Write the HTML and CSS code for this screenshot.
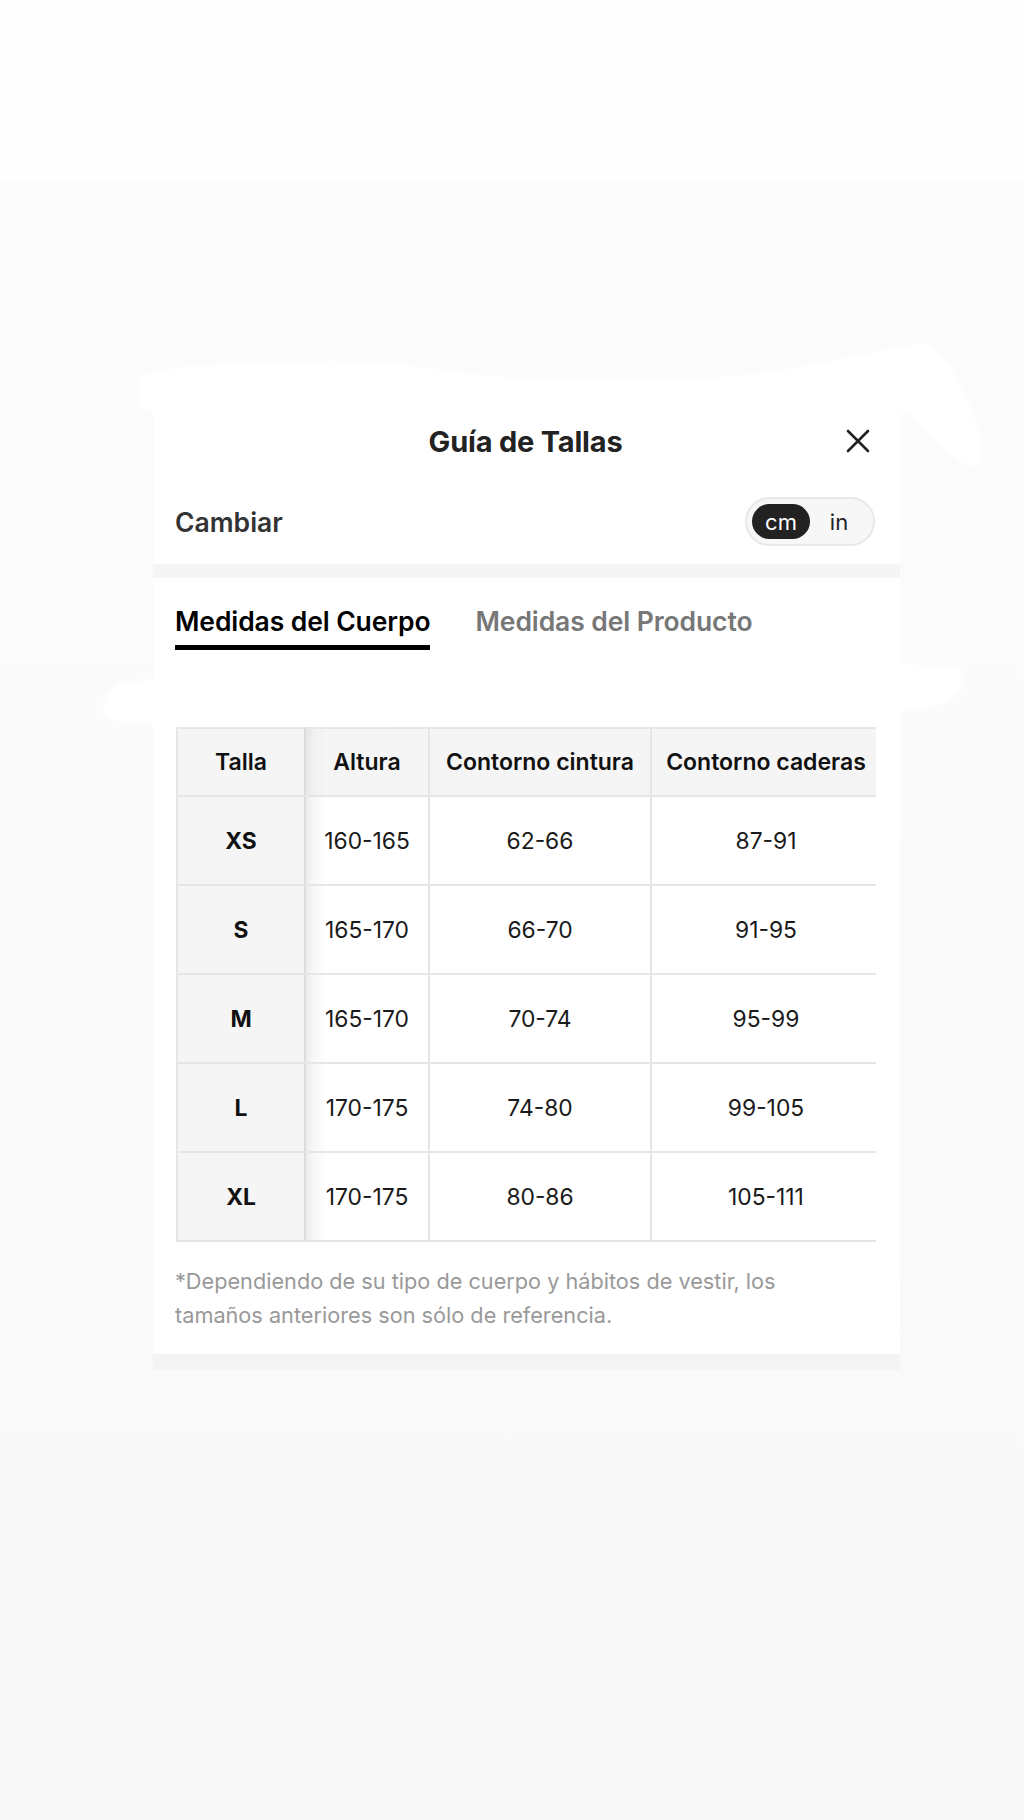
FILE: index.html
```html
<!DOCTYPE html>
<html lang="es">
<head>
<meta charset="utf-8">
<title>Guía de Tallas</title>
<link rel="stylesheet" href="styles.css">
</head>
<body>
<div class="page">
  <div class="card">
    <div class="header">
      <span></span>
      <h1 class="title">Guía de Tallas</h1>
      <button class="close" aria-label="Cerrar">
        <svg width="24" height="24" viewBox="0 0 24 24"><path d="M2 2 L22 22 M22 2 L2 22" stroke="#222" stroke-width="2.6" stroke-linecap="round" fill="none"/></svg>
      </button>
    </div>
    <div class="unit-row">
      <span class="unit-label">Cambiar</span>
      <div class="toggle">
        <span class="opt active">cm</span>
        <span class="opt">in</span>
      </div>
    </div>
    <div class="band"></div>
    <div class="tabs">
      <div class="tab active">Medidas del Cuerpo</div>
      <div class="tab">Medidas del Producto</div>
    </div>
    <div class="table-wrap">
      <table class="sizes">
        <thead>
          <tr><th class="c1">Talla</th><th class="c2">Altura</th><th class="c3">Contorno cintura</th><th class="c4">Contorno caderas</th></tr>
        </thead>
        <tbody>
          <tr><th class="c1">XS</th><td class="c2">160-165</td><td>62-66</td><td>87-91</td></tr>
          <tr><th class="c1">S</th><td class="c2">165-170</td><td>66-70</td><td>91-95</td></tr>
          <tr><th class="c1">M</th><td class="c2">165-170</td><td>70-74</td><td>95-99</td></tr>
          <tr><th class="c1">L</th><td class="c2">170-175</td><td>74-80</td><td>99-105</td></tr>
          <tr><th class="c1">XL</th><td class="c2">170-175</td><td>80-86</td><td>105-111</td></tr>
        </tbody>
      </table>
    </div>
    <p class="note">*Dependiendo de su tipo de cuerpo y hábitos de vestir, los tamaños anteriores son sólo de referencia.</p>
    <div class="band bottom"></div>
  </div>
  <svg class="brush brush1" width="880" height="140" viewBox="0 0 880 140"><path d="M10 40 C60 20 120 30 170 25 C230 18 300 30 360 38 C470 45 560 44 640 34 C700 26 760 10 800 5 C830 30 840 60 850 90 C855 110 860 125 845 130 C820 120 800 90 780 75 C600 80 400 75 200 70 C120 68 60 70 12 72 Z" fill="#fff"/></svg>
  <svg class="brush brush2" width="880" height="80" viewBox="0 0 880 80"><path d="M20 30 C120 14 300 10 500 12 C650 14 780 4 860 14 C870 34 850 52 820 56 C650 66 400 70 200 70 C100 70 30 72 5 64 C0 50 8 38 20 30 Z" fill="#fff"/></svg>
</div>
</body>
</html>
```

FILE: styles.css
```css
* { box-sizing: border-box; }
html, body { margin: 0; padding: 0; }
body {
  font-family: Inter, "Noto Sans", "Liberation Sans", sans-serif;
  color: #222;
}
.page {
  position: relative;
  width: 1024px;
  height: 1820px;
  background: linear-gradient(to bottom, #fefefe 0, #fefefe 178px, #fcfcfc 180px, #f8f8f8 1820px);
  padding-top: 400px;
  overflow: hidden;
}
.card {
  width: 747px;
  margin-left: 153px;
  background: #fff;
}
.header {
  display: grid;
  grid-template-columns: 1fr auto 1fr;
  align-items: center;
  height: 82px;
  padding: 0 30px 0 22px;
}
.title {
  margin: 0;
  font-size: 29px;
  font-weight: 700;
  color: #222;
  letter-spacing: -0.2px;
  padding-left: 6px;
}
.close {
  justify-self: end;
  border: 0;
  background: none;
  padding: 0;
  width: 24px;
  height: 24px;
  display: block;
}
.unit-row {
  display: flex;
  align-items: center;
  justify-content: space-between;
  padding: 15px 25px 18px 22px;
}
.unit-label {
  font-size: 26.5px;
  font-weight: 600;
  color: #333;
}
.toggle {
  display: flex;
  align-items: center;
  width: 130px;
  height: 49px;
  border: 2px solid #e8e8e8;
  border-radius: 25px;
  background: #f7f7f7;
  padding: 0 5px;
}
.opt {
  display: flex;
  align-items: center;
  justify-content: center;
  width: 62px;
  height: 35px;
  border-radius: 18px;
  font-size: 22px;
  color: #222;
}
.opt.active {
  background: #222;
  color: #fff;
}
.band {
  height: 14px;
  background: #f5f5f5;
}
.band.bottom {
  height: 16px;
  background: #f4f4f4;
}
.tabs {
  display: flex;
  gap: 45px;
  padding: 28px 22px 0;
}
.tab {
  font-size: 26.5px;
  font-weight: 600;
  line-height: 30px;
  color: #777;
  padding-bottom: 9px;
  border-bottom: 5px solid transparent;
  letter-spacing: -0.1px;
}
.tab.active {
  color: #000;
  border-bottom-color: #000;
}
.table-wrap {
  margin: 77px 24px 0 23px;
  overflow: hidden;
}
.sizes {
  border-collapse: collapse;
  width: 704px;
  table-layout: fixed;
}
.sizes th, .sizes td {
  border: 2px solid #e6e6e6;
  text-align: center;
  font-size: 22.8px;
  color: #111;
  padding: 0;
}
.sizes thead th {
  height: 68px;
  background: #f5f5f5;
  font-weight: 600;
  font-size: 23px;
  white-space: nowrap;
}
.sizes tbody tr { height: 89px; }
.sizes tbody th { font-weight: 700; background: #f5f5f5; }
.sizes td { font-weight: 400; color: #1a1a1a; }
.sizes .c1 { width: 128px; border-right-color: #dcdcdc; }
.sizes .c2 { width: 124px; }
.sizes tbody td.c2 { background: linear-gradient(to right, #ececec 0, #f8f8f8 8px, #fff 20px); }
.sizes thead th.c2 { background: linear-gradient(to right, #e6e6e6 0, #f1f1f1 8px, #f5f5f5 20px); }
.sizes .c3 { width: 222px; }
.sizes .c4 { width: 230px; }
.note {
  margin: 22px 0 0 22px;
  max-width: 650px;
  padding-bottom: 22px;
  font-size: 21.7px;
  line-height: 34px;
  color: #999;
}
.brush {
  position: absolute;
  filter: blur(2px);
  pointer-events: none;
}
.brush1 { left: 128px; top: 338px; }
.brush2 { left: 100px; top: 654px; }
```
